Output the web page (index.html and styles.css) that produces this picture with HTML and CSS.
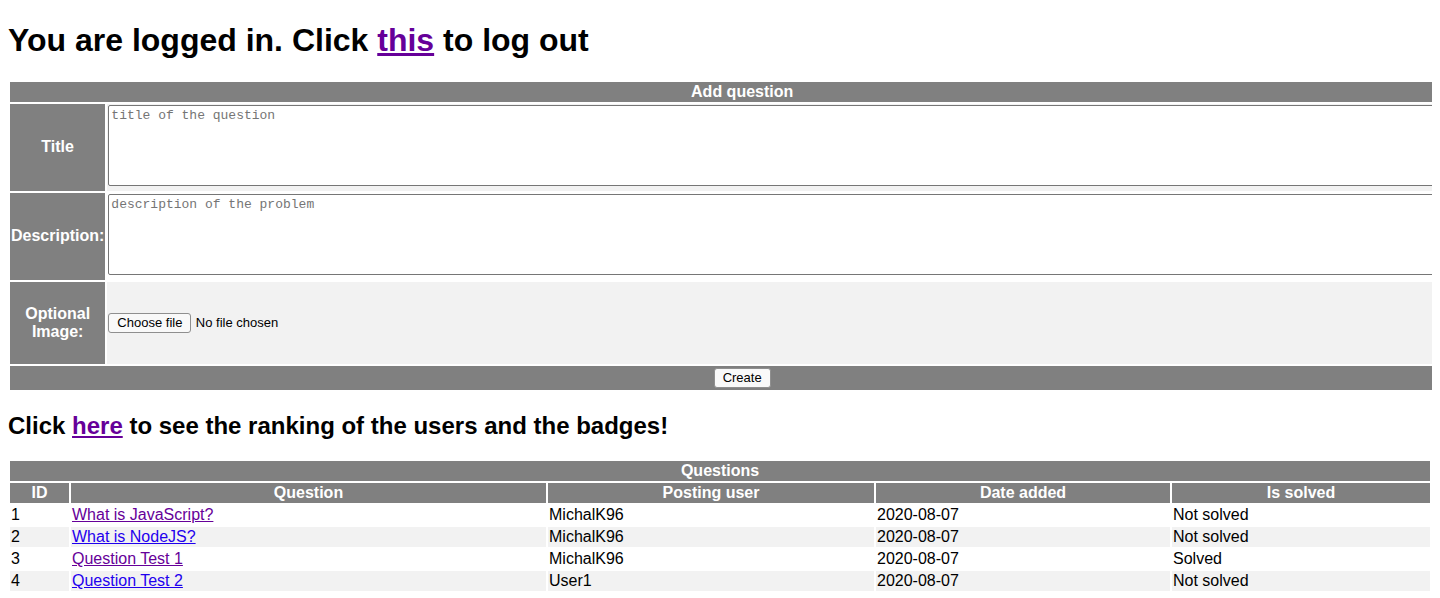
FILE: index.html
```html
<!DOCTYPE html>
<html lang="en">
<head>
<meta charset="utf-8">
<title>Questions</title>
<link rel="stylesheet" href="styles.css">
</head>
<body>
<h1 class="page-title">You are logged in. Click <a class="link link-visited" href="#">this</a> to log out</h1>
<form class="question-form">
  <table class="form-table">
    <colgroup><col class="c-label"><col class="c-field"></colgroup>
    <tr><th class="head" colspan="2">Add question</th></tr>
    <tr>
      <th class="label">Title</th>
      <td class="field"><textarea class="area" placeholder="title of the question"></textarea></td>
    </tr>
    <tr>
      <th class="label">Description:</th>
      <td class="field"><textarea class="area" placeholder="description of the problem"></textarea></td>
    </tr>
    <tr class="tall-row">
      <th class="label">Optional Image:</th>
      <td class="field"><button type="button" class="btn">Choose file</button> <span class="file-name">No file chosen</span></td>
    </tr>
    <tr><th class="head create-cell" colspan="2"><button type="button" class="btn">Create</button></th></tr>
  </table>
</form>
<h2 class="sub-title">Click <a class="link link-visited" href="#">here</a> to see the ranking of the users and the badges!</h2>
<table class="q-table">
  <colgroup>
    <col class="c-id"><col class="c-question"><col class="c-user"><col class="c-date"><col class="c-solved">
  </colgroup>
  <tr><th class="head" colspan="5">Questions</th></tr>
  <tr><th class="head">ID</th><th class="head">Question</th><th class="head">Posting user</th><th class="head">Date added</th><th class="head">Is solved</th></tr>
  <tr><td>1</td><td><a class="link link-visited" href="#">What is JavaScript?</a></td><td>MichalK96</td><td>2020-08-07</td><td>Not solved</td></tr>
  <tr><td>2</td><td><a class="link" href="#">What is NodeJS?</a></td><td>MichalK96</td><td>2020-08-07</td><td>Not solved</td></tr>
  <tr><td>3</td><td><a class="link link-visited" href="#">Question Test 1</a></td><td>MichalK96</td><td>2020-08-07</td><td>Solved</td></tr>
  <tr><td>4</td><td><a class="link" href="#">Question Test 2</a></td><td>User1</td><td>2020-08-07</td><td>Not solved</td></tr>
</table>
</body>
</html>
```

FILE: styles.css
```css
html {
  scrollbar-width: none;
  overflow-x: hidden;
}
html::-webkit-scrollbar {
  display: none;
}
body {
  margin: 8px;
  font-family: "Liberation Sans", Arial, Helvetica, sans-serif;
  font-size: 16px;
  color: #000;
  background: #fff;
}
.page-title {
  font-size: 32px;
  font-weight: bold;
  margin: 13.5px 0 21.44px;
}
.sub-title {
  font-size: 24px;
  font-weight: bold;
  margin: 19.92px 0 18.92px;
}
.link {
  color: #1f00ee;
  text-decoration: underline;
}
.link-visited {
  color: #660099;
}
.question-form {
  margin: 0;
}
table {
  border-spacing: 2px;
  border-collapse: separate;
}
th, td {
  padding: 1px;
}
.head, .label {
  background: #808080;
  color: #fff;
  font-weight: bold;
  text-align: center;
}
.c-label {
  width: 96px;
}
tr:nth-child(even) td {
  background: #f2f2f2;
}
.field {
  text-align: left;
}
.area {
  width: 1365px;
  height: 81px;
  box-sizing: border-box;
  padding: 2px;
  border: 1px solid #767676;
  border-radius: 2px;
  font-family: "Liberation Mono", "Courier New", monospace;
  font-size: 13px;
  line-height: 15px;
  background: #fff;
  color: #000;
  resize: none;
  margin: 0;
}
.area::placeholder {
  color: #757575;
}
.tall-row .label {
  height: 80px;
}
.create-cell {
  padding: 2px 1px;
}
.btn {
  font-family: "Liberation Sans", Arial, sans-serif;
  font-size: 13px;
  color: #000;
  background: #f9f9f9;
  border: 1px solid #8f8f8f;
  border-radius: 3px;
  height: 20px;
  box-sizing: border-box;
  padding: 0 8px;
  margin: 0;
  line-height: 18px;
}
.file-name {
  font-size: 13px;
}
.q-table {
  width: 100%;
  table-layout: fixed;
}
.q-table td {
  text-align: left;
}
.c-id { width: 59px; }
.c-question { width: 475px; }
.c-user { width: 326px; }
.c-date { width: 294px; }
.c-solved { width: 258px; }
```
